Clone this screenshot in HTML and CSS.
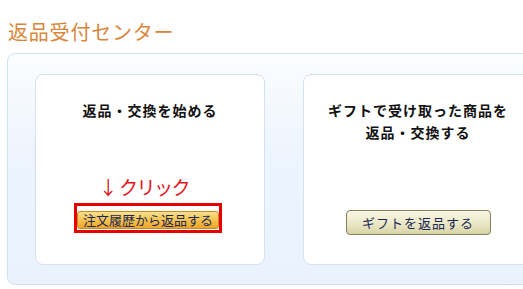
FILE: index.html
```html
<!DOCTYPE html>
<html lang="ja">
<head>
  <meta charset="UTF-8" />
  <title>返品受付センター</title>
  <link rel="stylesheet" href="styles.css">
</head>
<body>
  <h1 class="title">返品受付センター</h1>
  <div class="panel">
    <div class="card">
      <h2>返品・交換を始める</h2>
      <div class="action">
        <p class="hint">↓ クリック</p>
        <div class="mark">
          <button class="btn-order">注文履歴から返品する</button>
        </div>
      </div>
    </div>
    <div class="card">
      <h2>ギフトで受け取った商品を<br>返品・交換する</h2>
      <div class="action">
        <button class="btn-gift">ギフトを返品する</button>
      </div>
    </div>
  </div>
</body>
</html>
```

FILE: styles.css
```css
body {
  margin: 0;
  background: #ffffff;
  font-family: "Noto Sans CJK JP", "Noto Sans", sans-serif;
  overflow: hidden;
}
.title {
  margin: 18px 0 0 8px;
  font-size: 20px;
  font-weight: normal;
  line-height: 28px;
  color: #d9853a;
  letter-spacing: 0.8px;
}
.panel {
  margin: 7px 0 0 7px;
  width: 560px;
  height: 232px;
  box-sizing: border-box;
  padding: 20px 0 0 27px;
  display: flex;
  gap: 38px;
  border: 1px solid #d3e0ee;
  border-radius: 8px;
  background: linear-gradient(to bottom, #fbfdff 0%, #edf4fd 45%, #eaf2fc 100%);
}
.card {
  width: 230px;
  height: 191px;
  box-sizing: border-box;
  flex-shrink: 0;
  display: flex;
  flex-direction: column;
  align-items: center;
  background: #ffffff;
  border: 1px solid #d5e1ed;
  border-radius: 8px;
  padding: 24px 0 29px;
}
.card h2 {
  margin: 0;
  font-size: 14px;
  font-weight: bold;
  line-height: 22px;
  letter-spacing: 1px;
  text-align: center;
  color: #111111;
}
.action {
  margin-top: auto;
  display: flex;
  flex-direction: column;
  align-items: center;
}
.hint {
  margin: 0 0 2px -12px;
  font-size: 19px;
  line-height: 28px;
  color: #e0141c;
  letter-spacing: -1.5px;
}
.mark {
  border: 3px solid #e80000;
  margin: 0 4px 2px 0;
}
button {
  font-family: inherit;
  font-size: 13px;
  color: #1c2955;
  cursor: pointer;
  padding: 0;
}
.btn-order {
  height: 18px;
  line-height: 16px;
  padding: 0 5px;
  border: 1px solid #c98a1c;
  border-radius: 3px;
  background: linear-gradient(to bottom, #fbe08e 0%, #f6c24e 50%, #eda42c 100%);
}
.btn-gift {
  width: 145px;
  height: 25px;
  line-height: 22px;
  border: 1px solid #85825a;
  border-radius: 4px;
  background: linear-gradient(to bottom, #f8f6e2 0%, #ebe8c8 55%, #d8d3a6 100%);
  letter-spacing: 1px;
}
```
